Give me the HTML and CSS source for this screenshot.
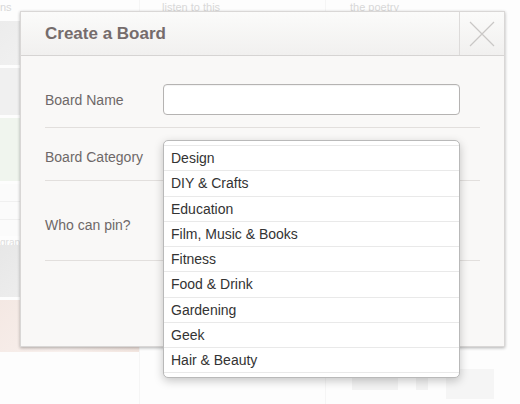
FILE: index.html
```html
<!DOCTYPE html>
<html>
<head>
<meta charset="utf-8">
<link rel="stylesheet" href="styles.css">
</head>
<body>
<div class="page">
  <div class="col col-a">
    <div class="cap">ns</div>
    <div class="pin p-gray" style="height:44px"></div>
    <div class="pin p-light" style="height:47px"></div>
    <div class="pin p-green" style="height:63px"></div>
    <div class="pin p-lines" style="height:52px"></div>
    <div class="cap small">graphi</div>
    <div class="pin p-gray2" style="height:52px"></div>
    <div class="pin p-pink" style="height:52px"></div>
  </div>
  <div class="col col-b">
    <div class="cap">listen to this</div>
  </div>
  <div class="col col-c">
    <div class="cap">the poetry</div>
    <div class="spacer"></div>
    <div class="bottom-bits">
      <span class="bit b1"></span>
      <span class="bit b2"></span>
      <span class="bit b3"></span>
    </div>
  </div>
</div>

<div class="modal">
  <div class="modal-head">
    <h2 class="title">Create a Board</h2>
    <button class="close" type="button" aria-label="Close">
      <svg width="26" height="26" viewBox="0 0 26 26"><path d="M1 1 L25 25 M25 1 L1 25" stroke="#c9c7c6" stroke-width="1.2" fill="none"/></svg>
    </button>
  </div>
  <div class="modal-body">
    <div class="row">
      <label class="label">Board Name</label>
      <input class="text-input" type="text">
    </div>
    <div class="row row-cat">
      <label class="label">Board Category</label>
    </div>
    <div class="row row-who">
      <label class="label">Who can pin?</label>
      <span class="peek"></span>
    </div>
  </div>
</div>

<ul class="dropdown">
  <li>Design</li>
  <li>DIY &amp; Crafts</li>
  <li>Education</li>
  <li>Film, Music &amp; Books</li>
  <li>Fitness</li>
  <li>Food &amp; Drink</li>
  <li>Gardening</li>
  <li>Geek</li>
  <li>Hair &amp; Beauty</li>
</ul>
</body>
</html>
```
FILE: styles.css
```css
* { box-sizing: border-box; }
html, body { margin: 0; padding: 0; }
body {
  width: 520px;
  height: 404px;
  overflow: hidden;
  background: #fdfdfd;
  font-family: "Liberation Sans", Arial, Helvetica, sans-serif;
  position: relative;
}

/* faded background page */
.page {
  display: flex;
  height: 404px;
}
.col { display: flex; flex-direction: column; }
.col-a { width: 140px; border-right: 1px solid #f5f5f5; }
.col-b { width: 186px; border-right: 1px solid #f5f5f5; padding-left: 22px; }
.col-c { flex: 1; padding-left: 24px; }
.cap {
  font-size: 11px;
  color: #d8d8d8;
  height: 21px;
  line-height: 14px;
}
.cap.small { height: 6px; line-height: 8px; font-size: 10px; color: #dedede; overflow: visible; }
.pin { width: 100%; margin-bottom: 3px; }
.p-gray { background: linear-gradient(135deg, #ececec, #f3f3f3 60%, #e9e9e9); }
.p-light { background: #f0f0f0; }
.p-green { background: #f0f5ee; }
.p-lines {
  background: repeating-linear-gradient(#fbfbfb 0 17px, #f0f0f0 17px 18px);
}
.p-gray2 { background: linear-gradient(135deg, #e7e7e7, #f0f0f0 55%, #e5e5e5); }
.p-pink { background: linear-gradient(135deg, #f4e8e3, #f8f0ed 60%, #f2e5df); }
.spacer { flex: 1; }
.bottom-bits { display: flex; gap: 18px; height: 40px; padding-left: 2px; align-items: center; }
.bit { display: block; background: #f3f3f3; }
.b1 { width: 46px; height: 12px; }
.b2 { width: 12px; height: 12px; }
.b3 { width: 48px; height: 30px; background: #f5f5f5; }

/* modal */
.modal {
  position: absolute;
  left: 20px;
  top: 11px;
  width: 485px;
  height: 336px;
  background: #f9f8f7;
  border: 1px solid #d9d7d6;
  box-shadow: 0 1px 3px rgba(0,0,0,0.3);
  display: flex;
  flex-direction: column;
}
.modal-head {
  height: 44px;
  display: flex;
  align-items: stretch;
  background: linear-gradient(#fbfbfa, #f1f0ef);
  border-bottom: 1px solid #d6d4d3;
}
.title {
  flex: 1;
  margin: 0;
  padding-left: 24px;
  font-size: 17px;
  font-weight: bold;
  color: #756c6c;
  line-height: 44px;
}
.close {
  width: 45px;
  border: 0;
  border-left: 1px solid #dddbda;
  background: transparent;
  padding: 0;
  display: flex;
  align-items: center;
  justify-content: center;
}
.modal-body {
  padding: 16px 24px 0 24px;
  display: flex;
  flex-direction: column;
}
.row {
  display: flex;
  align-items: center;
  padding: 12px 0;
  border-bottom: 1px solid #e2dfdd;
}
.label {
  width: 118px;
  font-size: 14px;
  color: #6e6868;
}
.text-input {
  width: 297px;
  height: 31px;
  border: 1px solid #b5b3b2;
  border-radius: 4px;
  background: #fff;
  box-shadow: inset 0 1px 1px rgba(0,0,0,0.05);
}
.row-cat { height: 53px; padding-top: 15px; padding-bottom: 10px; }
.row-who { height: 80px; padding-top: 15px; padding-bottom: 7px; }
.peek {
  width: 6px; height: 8px;
  border: 1px solid #cfcfcf;
  border-right: 0;
  border-radius: 4px 0 0 4px;
}

/* dropdown */
.dropdown {
  position: absolute;
  left: 163px;
  top: 140px;
  width: 297px;
  height: 238px;
  margin: 0;
  padding: 4px 0 0 0;
  list-style: none;
  background: #fff;
  border: 1px solid #b9b9b9;
  border-radius: 5px;
  box-shadow: 0 3px 10px rgba(0,0,0,0.22);
}
.dropdown li {
  height: 25.3px;
  line-height: 25px;
  padding-left: 7px;
  font-size: 14px;
  color: #333;
  border-top: 1px solid #e9e9e9;
}
.dropdown li:last-child { border-bottom: 1px solid #e9e9e9; }
```
